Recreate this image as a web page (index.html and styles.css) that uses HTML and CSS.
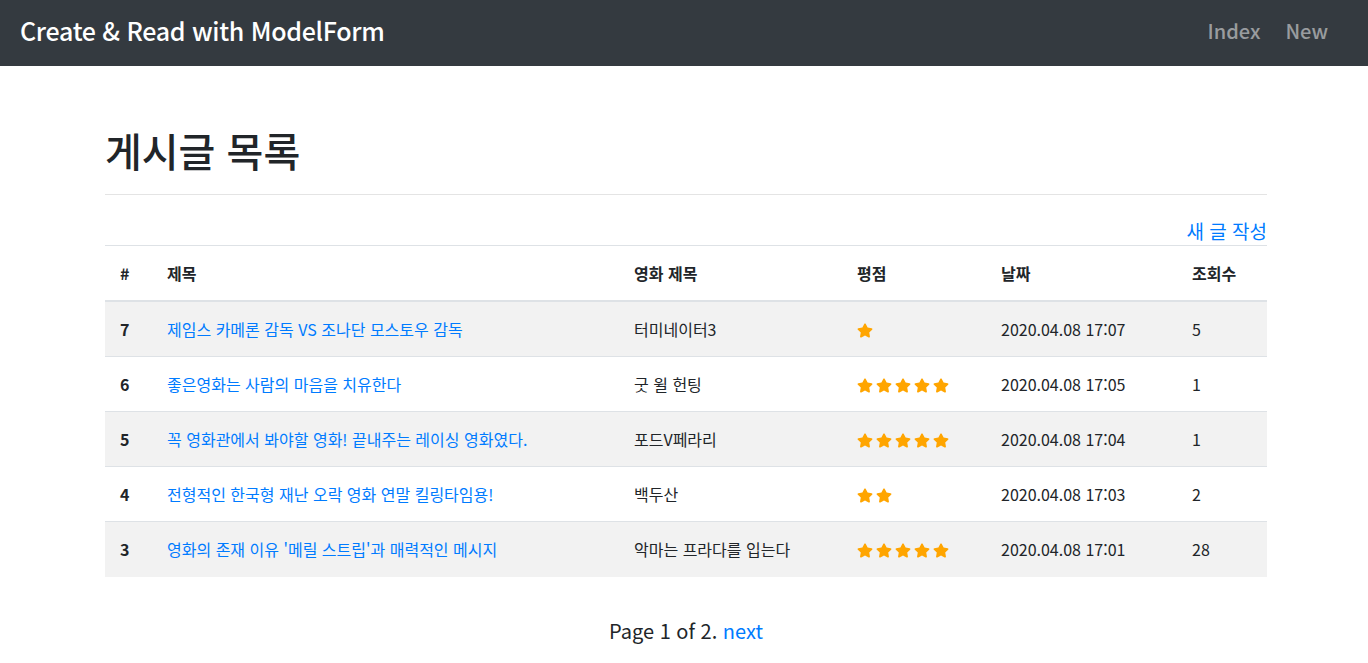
FILE: index.html
```html
<!DOCTYPE html>
<html lang="ko">
<head>
<meta charset="utf-8">
<title>Create &amp; Read with ModelForm</title>
<link rel="stylesheet" href="styles.css">
</head>
<body>
<nav class="navbar">
  <a class="brand" href="#">Create &amp; Read with ModelForm</a>
  <div class="nav-links">
    <a href="#">Index</a>
    <a href="#">New</a>
  </div>
</nav>
<main class="container">
  <h1 class="title">게시글 목록</h1>
  <hr class="divider">
  <div class="actions"><a href="#">새 글 작성</a></div>
  <table class="board">
    <colgroup>
      <col class="c-num"><col class="c-title"><col class="c-movie"><col class="c-score"><col class="c-date"><col class="c-views">
    </colgroup>
    <thead>
      <tr><th>#</th><th>제목</th><th>영화 제목</th><th>평점</th><th>날짜</th><th>조회수</th></tr>
    </thead>
    <tbody>
      <tr>
        <td class="num">7</td>
        <td><a href="#">제임스 카메론 감독 VS 조나단 모스토우 감독</a></td>
        <td>터미네이터3</td>
        <td class="stars" data-n="1"></td>
        <td>2020.04.08 17:07</td>
        <td>5</td>
      </tr>
      <tr>
        <td class="num">6</td>
        <td><a href="#">좋은영화는 사람의 마음을 치유한다</a></td>
        <td>굿 윌 헌팅</td>
        <td class="stars" data-n="5"></td>
        <td>2020.04.08 17:05</td>
        <td>1</td>
      </tr>
      <tr>
        <td class="num">5</td>
        <td><a href="#">꼭 영화관에서 봐야할 영화! 끝내주는 레이싱 영화였다.</a></td>
        <td>포드V페라리</td>
        <td class="stars" data-n="5"></td>
        <td>2020.04.08 17:04</td>
        <td>1</td>
      </tr>
      <tr>
        <td class="num">4</td>
        <td><a href="#">전형적인 한국형 재난 오락 영화 연말 킬링타임용!</a></td>
        <td>백두산</td>
        <td class="stars" data-n="2"></td>
        <td>2020.04.08 17:03</td>
        <td>2</td>
      </tr>
      <tr>
        <td class="num">3</td>
        <td><a href="#">영화의 존재 이유 '메릴 스트립'과 매력적인 메시지</a></td>
        <td>악마는 프라다를 입는다</td>
        <td class="stars" data-n="5"></td>
        <td>2020.04.08 17:01</td>
        <td>28</td>
      </tr>
    </tbody>
  </table>
  <p class="pager">Page 1 of 2. <a href="#">next</a></p>
</main>
<script>
  var star = '<svg class="star" viewBox="0 0 576 512"><path d="M259.3 17.8L194 150.2 47.9 171.5c-26.2 3.8-36.7 36.1-17.7 54.6l105.7 103-25 145.5c-4.5 26.3 23.2 46 46.4 33.7L288 439.6l130.7 68.7c23.2 12.2 50.9-7.4 46.4-33.7l-25-145.5 105.7-103c19-18.5 8.5-50.8-17.7-54.6L382 150.2 316.7 17.8c-11.7-23.6-45.6-23.9-57.4 0z"/></svg>';
  document.querySelectorAll('.stars').forEach(function (td) {
    var n = +td.getAttribute('data-n'), h = '';
    for (var i = 0; i < n; i++) h += star;
    td.innerHTML = h;
  });
</script>
</body>
</html>
```
FILE: styles.css
```css
* { box-sizing: border-box; }
html, body {
  margin: 0;
  padding: 0;
  background: #fff;
  color: #212529;
  font-family: "Noto Sans CJK KR", "Noto Sans", sans-serif;
  font-size: 16px;
  line-height: 1.5;
}
a { color: #007bff; text-decoration: none; }

.navbar {
  height: 66px;
  background: #343a40;
  display: flex;
  align-items: center;
  justify-content: space-between;
  padding: 0 40px 4px 20px;
}
.brand {
  color: #fff;
  font-size: 25px;
  font-weight: 500;
  letter-spacing: -0.3px;
}
.nav-links { display: flex; gap: 25px; }
.nav-links a {
  color: rgba(255, 255, 255, 0.5);
  font-size: 20px;
  font-weight: 500;
}

.container {
  width: 1162px;
  margin: 0 0 0 105px;
  padding-top: 60px;
}
.title {
  margin: 0;
  font-size: 40px;
  font-weight: 500;
  line-height: 1.2;
}
.divider {
  margin: 20px 0 0;
  border: 0;
  border-top: 1px solid #e4e4e4;
}
.actions {
  text-align: right;
  padding-top: 21px;
  height: 50px;
}
.actions a { font-size: 19px; line-height: 30px; }

.board {
  width: 100%;
  border-collapse: collapse;
  font-size: 16px;
}
.c-num { width: 47px; }
.c-title { width: 467px; }
.c-movie { width: 223px; }
.c-score { width: 144px; }
.c-date { width: 191px; }
.c-views { width: 90px; }
.board th, .board td {
  text-align: left;
  padding: 15px 15px;
  height: 55px;
  border-top: 1px solid #dee2e6;
  vertical-align: middle;
}
.board th { font-weight: 700; border-bottom: 2px solid #dee2e6; }
.board td.num { font-weight: 700; }
.board tbody tr:nth-child(odd) { background: #f2f2f2; }
.stars { white-space: nowrap; }
.star {
  width: 16px;
  height: 15px;
  fill: #ffa500;
  margin-right: 3px;
  vertical-align: -2px;
}
.pager {
  text-align: center;
  font-size: 20px;
  margin: 39px 0 0;
}
```
